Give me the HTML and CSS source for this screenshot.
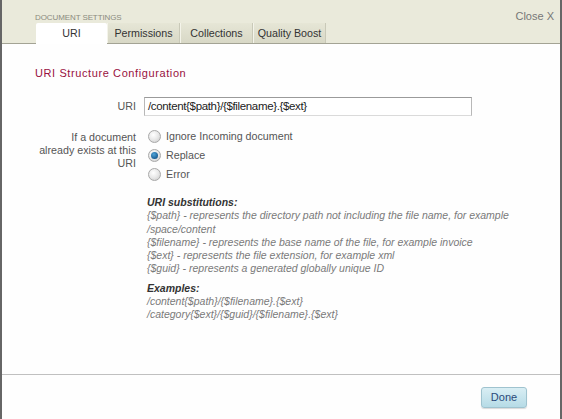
FILE: index.html
```html
<!DOCTYPE html>
<html>
<head>
<meta charset="utf-8">
<link rel="stylesheet" href="styles.css">
</head>
<body>
<div class="dialog">
  <div class="header">
    <div class="header-top">
      <span class="title">DOCUMENT SETTINGS</span>
      <span class="close">Close X</span>
    </div>
    <div class="tabs">
      <div class="tab active">URI</div>
      <div class="tab">Permissions</div>
      <div class="tab">Collections</div>
      <div class="tab">Quality Boost</div>
    </div>
  </div>
  <div class="content">
    <h2 class="heading">URI Structure Configuration</h2>
    <div class="row uri-row">
      <div class="label">URI</div>
      <div class="field"><div class="input">/content{$path}/{$filename}.{$ext}</div></div>
    </div>
    <div class="row exists-row">
      <div class="label">If a document already exists at this URI</div>
      <div class="field radios">
        <div class="radio-line"><span class="radio"></span>Ignore Incoming document</div>
        <div class="radio-line"><span class="radio checked"></span>Replace</div>
        <div class="radio-line"><span class="radio"></span>Error</div>
      </div>
    </div>
    <div class="help">
      <div class="help-title">URI substitutions:</div>
      <div>{$path} - represents the directory path not including the file name, for example /space/content</div>
      <div>{$filename} - represents the base name of the file, for example invoice</div>
      <div>{$ext} - represents the file extension, for example xml</div>
      <div>{$guid} - represents a generated globally unique ID</div>
      <div class="help-title examples">Examples:</div>
      <div>/content{$path}/{$filename}.{$ext}</div>
      <div>/category{$ext}/{$guid}/{$filename}.{$ext}</div>
    </div>
  </div>
  <div class="footer">
    <button class="done">Done</button>
  </div>
</div>
</body>
</html>
```
FILE: styles.css
```css
html, body {
  margin: 0;
  padding: 0;
  background: #fefefe;
}
body {
  font-family: "Liberation Sans", Arial, sans-serif;
  font-size: 11px;
  color: #444;
}
.dialog {
  width: 558px;
  height: 419px;
  border-left: 2px solid #666;
  border-right: 2px solid #666;
  display: flex;
  flex-direction: column;
  background: #fefefe;
}
.header {
  background: #eaeadb;
  border-bottom: 1px solid #a3a394;
  height: 43px;
  display: flex;
  flex-direction: column;
  justify-content: space-between;
}
.header-top {
  display: flex;
  justify-content: space-between;
  align-items: baseline;
  padding: 10px 6px 0 33px;
}
.title {
  font-size: 8px;
  color: #8a8a7e;
  letter-spacing: -0.1px;
}
.close {
  font-size: 11px;
  color: #777;
}
.tabs {
  display: flex;
  padding-left: 34px;
  height: 20px;
}
.tab {
  width: 73px;
  height: 20px;
  box-sizing: border-box;
  text-align: center;
  line-height: 20px;
  color: #333;
  font-size: 10.7px;
  background: linear-gradient(#e6e6d6, #d8d8c6);
  border-left: 1px solid #f4f4ea;
  border-right: 1px solid #c9c9b8;
}
.tab.active {
  background: #fff;
  border: none;
  width: 71px;
  height: 21px;
  margin-bottom: -1px;
  position: relative;
  border-radius: 2px 2px 0 0;
}
.content {
  flex: 1;
  padding: 0 0 0 33px;
  border-bottom: 1px solid #c0c0c0;
}
.heading {
  margin: 22px 0 0 0;
  font-size: 11px;
  font-weight: normal;
  color: #99113f;
  letter-spacing: 0.6px;
  line-height: 14px;
}
.row {
  display: flex;
}
.label {
  width: 101px;
  text-align: right;
  color: #555;
  line-height: 13px;
  font-size: 10.7px;
}
.field {
  margin-left: 8px;
}
.uri-row {
  margin-top: 17px;
  align-items: center;
}
.input {
  width: 328px;
  height: 19px;
  box-sizing: border-box;
  border: 1px solid #b8b8b8;
  border-top-color: #9a9a9a;
  border-bottom-color: #dadada;
  font-size: 11.5px;
  letter-spacing: -0.35px;
  line-height: 17px;
  padding-left: 3px;
  color: #222;
  background: #fff;
}
.exists-row {
  margin-top: 13px;
}
.exists-row .label {
  padding-top: 2px;
}
.radios {
  display: flex;
  flex-direction: column;
  gap: 5px;
  margin-left: 12px;
}
.radio-line {
  display: flex;
  align-items: center;
  height: 14px;
  color: #555;
  font-size: 10.7px;
}
.radio {
  width: 11px;
  height: 11px;
  border-radius: 50%;
  border: 1px solid #a8a8a8;
  background: radial-gradient(circle at 40% 35%, #ffffff 0%, #e8e8e8 50%, #c8c8c8 100%);
  margin-right: 5px;
  position: relative;
  flex: none;
}
.radio.checked::after {
  content: "";
  position: absolute;
  left: 2px;
  top: 2px;
  width: 7px;
  height: 7px;
  border-radius: 50%;
  background: radial-gradient(circle at 40% 35%, #4fa4d8 0%, #1b5f95 70%, #0e3f6a 100%);
}
.help {
  margin: 15px 0 0 112px;
  width: 372px;
  font-style: italic;
  font-size: 10.5px;
  color: #7a7a7a;
  line-height: 13.3px;
}
.help-title {
  font-weight: bold;
  color: #333;
}
.examples {
  margin-top: 6px;
}
.footer {
  height: 44px;
  display: flex;
  justify-content: flex-end;
  align-items: center;
  padding-right: 33px;
}
.done {
  width: 46px;
  height: 21px;
  font-family: "Liberation Sans", Arial, sans-serif;
  font-size: 11px;
  color: #2a4a7a;
  border: 1px solid #9fc3cf;
  border-radius: 3px;
  background: linear-gradient(#d9eef4, #b6dbe6);
  box-shadow: 0 1px 1px rgba(0,0,0,0.15);
  padding: 0;
}
```
